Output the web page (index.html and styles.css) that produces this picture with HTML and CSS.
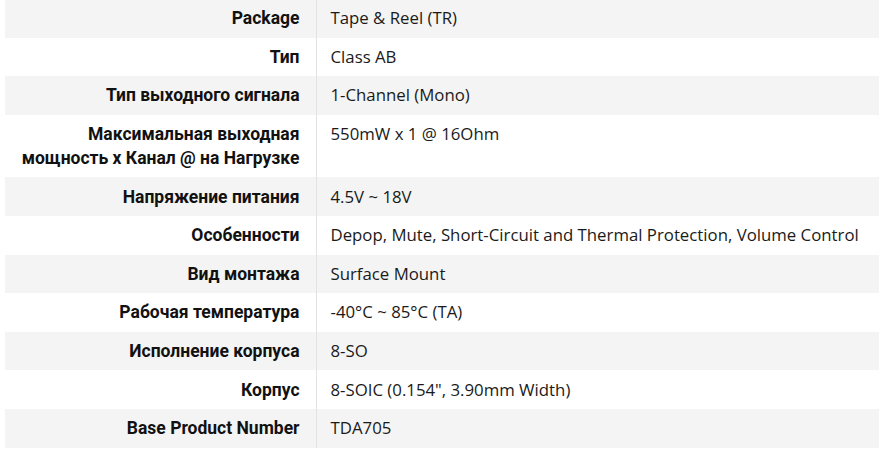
FILE: index.html
```html
<!DOCTYPE html>
<html lang="ru">
<head>
<meta charset="utf-8">
<link rel="stylesheet" href="styles.css">
</head>
<body>
<table class="specs">
<tbody>
<tr><th>Package</th><td>Tape &amp; Reel (TR)</td></tr>
<tr><th>Тип</th><td>Class AB</td></tr>
<tr><th>Тип выходного сигнала</th><td>1-Channel (Mono)</td></tr>
<tr><th>Максимальная выходная мощность x Канал @ на Нагрузке</th><td>550mW x 1 @ 16Ohm</td></tr>
<tr><th>Напряжение питания</th><td>4.5V ~ 18V</td></tr>
<tr><th>Особенности</th><td>Depop, Mute, Short-Circuit and Thermal Protection, Volume Control</td></tr>
<tr><th>Вид монтажа</th><td>Surface Mount</td></tr>
<tr><th>Рабочая температура</th><td>-40°C ~ 85°C (TA)</td></tr>
<tr><th>Исполнение корпуса</th><td>8-SO</td></tr>
<tr><th>Корпус</th><td>8-SOIC (0.154", 3.90mm Width)</td></tr>
<tr><th>Base Product Number</th><td>TDA705</td></tr>
</tbody>
</table>
</body>
</html>
```
FILE: styles.css
```css
html, body {
  margin: 0;
  padding: 0;
  background: #fff;
}
body {
  padding: 0 0 0 5px;
  font-family: "Open Sans", "Noto Sans", sans-serif;
  font-size: 16.8px;
  color: #1a1a1a;
}
.specs {
  border-collapse: collapse;
  width: 880px;
  margin-top: -1px;
}
.specs tr:nth-child(odd) {
  background: #f4f4f4;
}
.specs th {
  width: 311px;
  box-sizing: border-box;
  text-align: right;
  font-family: Roboto, "Open Sans", sans-serif;
  font-size: 17.5px;
  font-weight: 700;
  color: #111;
  padding: 7.3px 16px 7.3px 10px;
  line-height: 24px;
  border-right: 1px solid #e2e2e2;
  vertical-align: top;
}
.specs td {
  text-align: left;
  padding: 7.3px 10px 7.3px 14px;
  line-height: 24px;
  vertical-align: top;
  color: #1a1a1a;
  white-space: nowrap;
}
```
